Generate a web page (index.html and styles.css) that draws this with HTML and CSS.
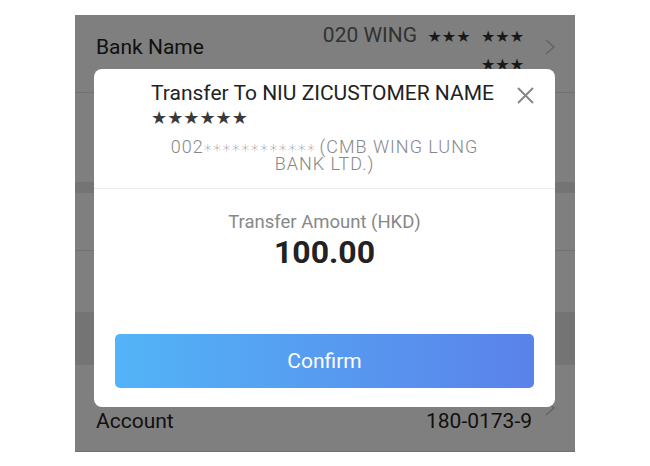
FILE: index.html
```html
<!DOCTYPE html>
<html lang="en">
<head>
  <meta charset="UTF-8">
  <meta name="viewport" content="width=device-width, initial-scale=1.0">
  <title>Transfer</title>
  <link rel="stylesheet" href="styles.css">
</head>
<body>
  <div class="phone">
    <div class="page">
      <div class="row row-bank">
        <span class="label">Bank Name</span>
        <span class="value">020 WING&nbsp; <span class="star">★★★</span>&nbsp; <span class="star">★★★</span> <span class="star">★★★</span></span>
        <svg class="chevron" width="10" height="16" viewBox="0 0 10 16"><polyline points="1,1 9,8 1,15" fill="none" stroke="#c4c4c4" stroke-width="1.5"></polyline></svg>
      </div>
      <div class="row row-tall"></div>
      <div class="gap"></div>
      <div class="row row-a"></div>
      <div class="row row-b"></div>
      <div class="section"></div>
      <div class="row row-account">
        <span class="label">Account</span>
        <span class="value-acc">180-0173-9</span>
        <svg class="chevron chevron-acc" width="10" height="16" viewBox="0 0 10 16"><polyline points="1,1 9,8 1,15" fill="none" stroke="#c4c4c4" stroke-width="1.5"></polyline></svg>
      </div>
    </div>

    <div class="mask"></div>

    <div class="dialog">
      <div class="dialog-head">
        <div class="title">Transfer To NIU ZICUSTOMER NAME <span class="star star-title">★★★★★★</span></div>
        <div class="account">002<span class="tiny">************</span>(CMB WING LUNG BANK LTD.)</div>
        <svg class="close" width="17" height="17" viewBox="0 0 17 17">
          <path d="M1 1 L16 16 M16 1 L1 16" stroke="#888" stroke-width="2" fill="none"></path>
        </svg>
      </div>
      <div class="dialog-body">
        <div class="amount-label">Transfer Amount (HKD)</div>
        <div class="amount">100.00</div>
        <button class="confirm">Confirm</button>
      </div>
    </div>
  </div>
</body>
</html>
```

FILE: styles.css
```css
body {
  margin: 0;
  background: #fff;
  font-family: Roboto, "Noto Sans", "Liberation Sans", sans-serif;
}

.phone {
  position: relative;
  width: 500px;
  height: 437px;
  margin: 15px 0 0 75px;
  overflow: hidden;
  background: #fff;
}

/* page under the mask */
.row {
  display: flex;
  align-items: center;
  padding: 0 20px 0 21px;
  background: #fff;
  border-bottom: 1px solid #e2e2e2;
}
.row-bank {
  height: 78px;
  align-items: flex-start;
  padding-top: 20px;
  box-sizing: border-box;
}
.row-tall {
  height: 89px;
  border-bottom: none;
}
.gap {
  height: 11px;
  background: #e9e9e9;
}
.row-a {
  height: 57px;
}
.row-b {
  height: 61px;
  border-bottom: none;
}
.section {
  height: 53px;
  background: #e9e9e9;
}
.row-account {
  height: 87px;
  align-items: flex-start;
  padding-top: 44px;
  box-sizing: border-box;
}

.label {
  flex: 1;
  font-size: 21px;
  line-height: 24px;
  color: #222;
}
.value {
  width: 214px;
  margin-top: -13px;
  font-size: 21px;
  line-height: 27px;
  color: #666;
  text-align: right;
}
.star {
  font-family: "DejaVu Sans", sans-serif;
  font-size: 16px;
  color: #333;
}
.value-acc {
  margin-right: -8px;
  font-size: 21px;
  line-height: 24px;
  color: #222;
}
.chevron {
  flex-shrink: 0;
  margin-left: 21px;
}
.row-bank .chevron {
  margin-top: 4px;
}
.chevron-acc {
  margin-top: -9px;
}

.mask {
  position: absolute;
  top: 0;
  left: 0;
  right: 0;
  bottom: 0;
  background: rgba(0, 0, 0, 0.5);
}

/* dialog */
.dialog {
  position: absolute;
  top: 54px;
  left: 19px;
  width: 461px;
  background: #fff;
  border-radius: 8px;
}
.dialog-head {
  position: relative;
  padding: 12px 0 16px;
  border-bottom: 1px solid #ececec;
}
.title {
  margin: 0 57px;
  font-size: 21px;
  line-height: 24px;
  color: #222;
}
.star-title {
  font-size: 18px;
  color: #3a3a3a;
}
.account {
  margin: 8px 64px 0;
  font-size: 18px;
  font-weight: 300;
  letter-spacing: 1px;
  line-height: 17px;
  color: #888;
  text-align: center;
}
.tiny {
  margin-right: 3px;
  font-family: "DejaVu Sans", sans-serif;
  font-size: 16px;
  letter-spacing: 1.4px;
  line-height: 0;
  vertical-align: -3px;
}
.close {
  position: absolute;
  top: 18px;
  right: 21px;
}

.dialog-body {
  padding: 22px 21px 19px;
  text-align: center;
}
.amount-label {
  font-size: 18.5px;
  line-height: 22px;
  color: #888;
}
.amount {
  margin-top: 1px;
  font-size: 32px;
  font-weight: 700;
  line-height: 36px;
  color: #222;
}
.confirm {
  display: block;
  width: 100%;
  height: 54px;
  margin-top: 64px;
  border: none;
  border-radius: 5px;
  background: linear-gradient(to right, #53b4f7, #5a82ea);
  color: #fff;
  font-family: Roboto, "Noto Sans", sans-serif;
  font-size: 21px;
}
```
